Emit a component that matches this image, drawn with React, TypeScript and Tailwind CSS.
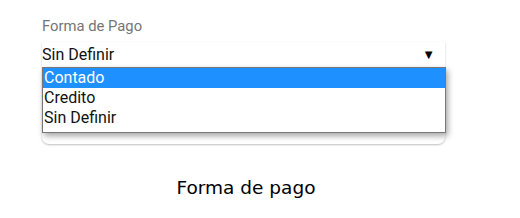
import React from "react";

export default function App() {
  const rows = ["Contado", "Credito", "Sin Definir"];
  return (
    <div className="w-[520px] h-[218px] bg-white relative" style={{ fontFamily: "Roboto, 'Noto Sans', sans-serif" }}>
      <div className="pl-[42px] pt-[17px]">
        <div className="text-[14.8px] leading-[18px] text-[#757575]">Forma de Pago</div>
        <div className="w-[403px] h-[102px] mt-[7px] rounded-b-[7px] shadow-[0_1px_2px_rgba(0,0,0,0.25)] flex justify-between items-start pt-[4px]">
          <span className="text-[16px] leading-[18px] text-[#111]">Sin Definir</span>
          <span className="text-[13px] leading-[18px] mr-[10px] text-black">▼</span>
        </div>
      </div>
      <div className="absolute left-[42px] top-[67px] w-[404px] border border-[#777] bg-white shadow-[2px_3px_6px_rgba(0,0,0,0.35)] flex flex-col">
        {rows.map((r, i) => (
          <div
            key={r}
            className={
              i === 0
                ? "h-[20px] leading-[20px] text-[16px] pl-[1px] bg-[#1e90ff] text-white"
                : "h-[20px] leading-[20px] text-[16px] pl-[1px] text-[#111]"
            }
          >
            {r}
          </div>
        ))}
        <div className="h-[4px]" />
      </div>
      <div className="absolute left-0 right-0 top-[177px] flex justify-center">
        <span className="text-[18.5px] leading-[22px] text-black ml-[-28px]" style={{ fontFamily: "'DejaVu Sans', sans-serif" }}>
          Forma de pago
        </span>
      </div>
    </div>
  );
}
